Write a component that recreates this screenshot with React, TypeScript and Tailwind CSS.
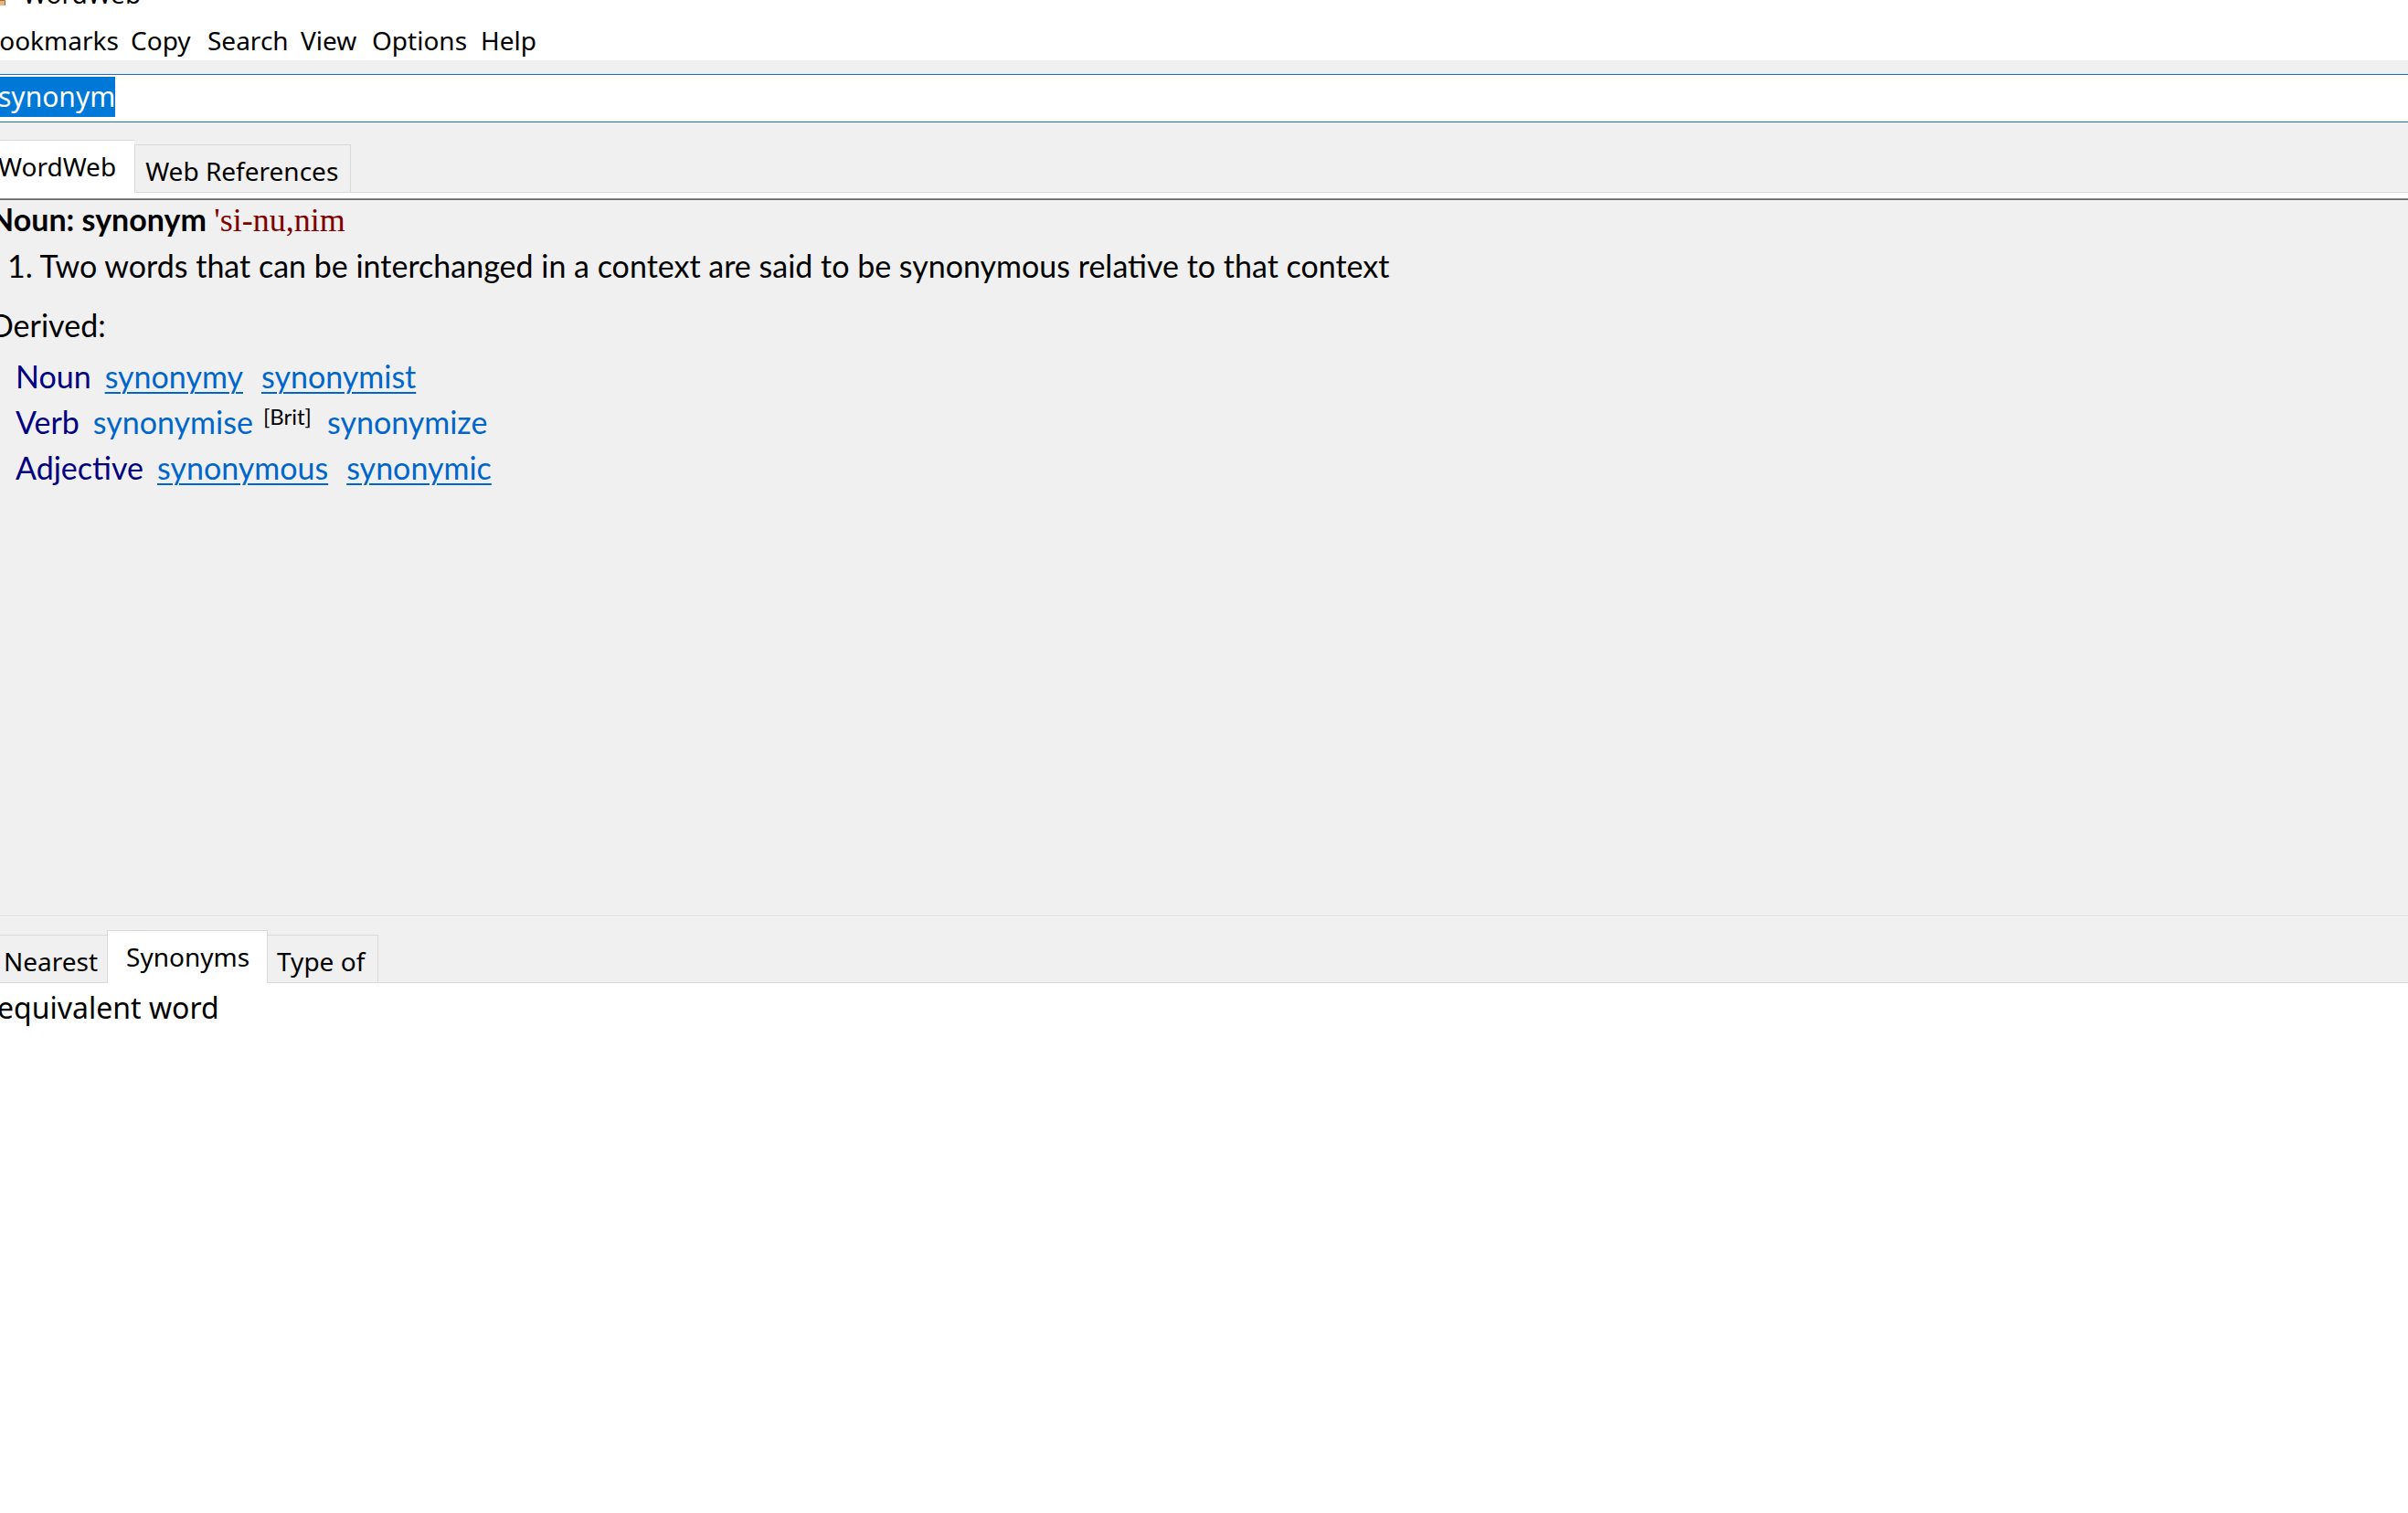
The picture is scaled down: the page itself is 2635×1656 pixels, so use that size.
import React from 'react';

const menuItems: { label: string; w: string }[] = [
  { label: 'Bookmarks', w: 'w-[162px]' },
  { label: 'Copy', w: 'w-[84px]' },
  { label: 'Search', w: 'w-[102px]' },
  { label: 'View', w: 'w-[78px]' },
  { label: 'Options', w: 'w-[119px]' },
  { label: 'Help', w: 'w-auto' },
];

function Link({ children, plain }: { children: React.ReactNode; plain?: boolean }) {
  return (
    <span
      className={
        plain
          ? 'text-[#0066cc]'
          : 'text-[#0066cc] underline decoration-2 underline-offset-[4px]'
      }
    >
      {children}
    </span>
  );
}

export default function App() {
  return (
    <div className="flex h-[1656px] w-[2635px] flex-col overflow-hidden bg-white font-['Noto_Sans',sans-serif] text-black">
      {/* title bar, mostly scrolled off the top */}
      <div className="flex h-[6px] items-start overflow-hidden">
        <div className="-ml-[6px] h-[8px] w-[12px] rounded-br-[3px] border border-[#9a6a3a] bg-[#eab57c]" />
        <span className="-mt-[21px] ml-[19px] text-[28px] leading-[28px]">WordWeb</span>
      </div>

      {/* menu */}
      <div className="-ml-[19px] flex h-[60px] pt-[18px] text-[28px] leading-[40px]">
        {menuItems.map((m) => (
          <div key={m.label} className={m.w}>
            {m.label}
          </div>
        ))}
      </div>

      <div className="h-[15px] bg-[#f0f0f0]" />

      {/* search box */}
      <div className="h-[53px] border-y border-[#1e6fbd] bg-white pt-[2px]">
        <span className="-ml-[2px] inline-block bg-[#0078d7] text-[30px] leading-[44px] text-white">
          synonym
        </span>
      </div>

      {/* upper tabs */}
      <div className="bg-[#f0f0f0] pt-[19px]">
        <div className="flex items-end text-[28px] leading-[40px]">
          <div className="-ml-[14px] h-[58px] border-t border-[#d9d9d9] bg-white pl-[12px] pr-[20px] pt-[8px]">
            WordWeb
          </div>
          <div className="h-[53px] border border-[#d9d9d9] pl-[11px] pr-[13px] pt-[8px]">
            Web References
          </div>
          <div className="flex-1 border-b border-[#d9d9d9]" />
        </div>
      </div>
      <div className="h-[6px] bg-white" />

      {/* definition panel */}
      <div className="h-[785px] border-t border-[#8a8a8a] bg-[#f0f0f0]">
        <div className="h-full border-t border-[#646464] pt-[1px]">
          <div className="-ml-[11px] font-['Lato',sans-serif] text-[34px]">
            <div className="font-bold leading-[40px]">
              Noun: synonym{' '}
              <span className="font-['Liberation_Serif',serif] text-[36px] font-normal text-[#800000]">
                {"'si-nu,nim"}
              </span>
            </div>
            <div className="ml-[19px] mt-[5px] leading-[50px]">
              1. Two words that can be interchanged in a context are said to be synonymous relative to that context
            </div>
            <div className="mt-[15px] leading-[50px]">Derived:</div>
            <div className="ml-[28px] mt-[6px] leading-[50px]">
              <div>
                <span className="mr-[15px] text-[#000080]">Noun</span>
                <span className="mr-[20px]">
                  <Link>synonymy</Link>
                </span>
                <Link>synonymist</Link>
              </div>
              <div>
                <span className="mr-[15px] text-[#000080]">Verb</span>
                <Link plain>synonymise</Link>
                <span className="ml-[11px] mr-[17px] align-[10px] text-[24px] leading-none">[Brit]</span>
                <Link plain>synonymize</Link>
              </div>
              <div>
                <span className="mr-[15px] text-[#000080]">Adjective</span>
                <span className="mr-[20px]">
                  <Link>synonymous</Link>
                </span>
                <Link>synonymic</Link>
              </div>
            </div>
          </div>
        </div>
      </div>

      {/* splitter */}
      <div className="h-px bg-[#dadada]" />
      <div className="h-px bg-white" />

      {/* lower tabs */}
      <div className="bg-[#f0f0f0] pt-[14px]">
        <div className="flex items-end text-[28px] leading-[40px]">
          <div className="-ml-[8px] h-[53px] border-y border-[#d9d9d9] pl-[12px] pr-[10px] pt-[8px]">
            Nearest
          </div>
          <div className="h-[58px] w-[176px] border-x border-t border-[#d9d9d9] bg-white pl-[20px] pt-[8px]">
            Synonyms
          </div>
          <div className="h-[53px] w-[121px] border-y border-r border-[#d9d9d9] pl-[10px] pt-[8px]">
            Type of
          </div>
          <div className="flex-1 border-b border-[#d9d9d9]" />
        </div>
      </div>

      {/* synonyms list */}
      <div className="flex-1 bg-white">
        <div className="-ml-[3px] mt-[5px] text-[32px] leading-[44px]">equivalent word</div>
      </div>
    </div>
  );
}
